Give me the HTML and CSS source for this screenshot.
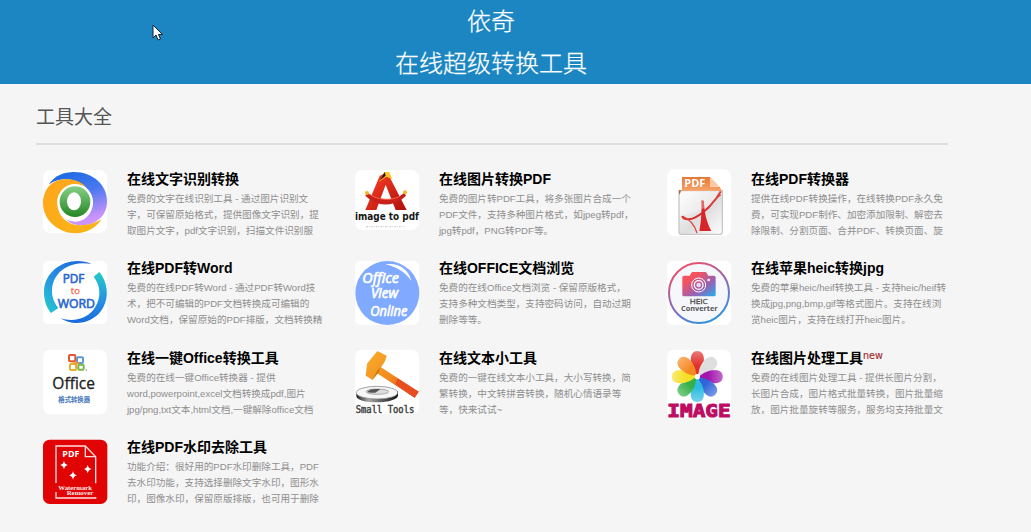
FILE: index.html
```html
<!DOCTYPE html>
<html lang="zh-CN">
<head>
<meta charset="utf-8">
<title>依奇在线超级转换工具</title>
<link rel="stylesheet" href="styles.css">
</head>
<body>
<header class="banner">
  <h1 class="banner-title">依奇<br>在线超级转换工具</h1>
</header>
<svg class="cursor" viewBox="0 0 11 17"><path d="M1 1v13l3-3 2 5 2.500-1-2-4.500h4z" fill="#fff" stroke="#123" stroke-width="1"/></svg>
<main class="page">
  <h2 class="section-title">工具大全</h2>
  <div class="tools">

    <a class="tool">
      <svg class="icon" viewBox="38 33 192 192">
        <defs>
          <linearGradient id="ob" x1="0" y1="0" x2="0.300" y2="1"><stop offset="0" stop-color="#1268e0"/><stop offset=".5" stop-color="#4a78f0"/><stop offset="1" stop-color="#cb94fb"/></linearGradient>
          <linearGradient id="og" x1="0" y1="0" x2="0" y2="1"><stop offset="0" stop-color="#86cf86"/><stop offset="1" stop-color="#258625"/></linearGradient>
          <linearGradient id="oy" x1="0" y1="0" x2="1" y2="1"><stop offset="0" stop-color="#ffa51a"/><stop offset="1" stop-color="#f8b619"/></linearGradient>
        </defs>
        <rect x="38" y="30" width="192" height="189" rx="22" fill="#fff"/>
        <path d="M56 73C72 47 101 36 131 36c56 0 99 38 99 89 0 42-34 71-77 71-22 0-39-8-47-22z" fill="url(#ob)"/>
        <path d="M54 75c24-20 68-24 97-4 26 14 38 36 37 59-1 28-21 50-43 54-15 3-31-1-41-9z" fill="#fff"/>
        <path d="M38 130c0-42 28-71 62-72 26-2 48 5 66 21C115 66 80 92 81 130c1 38 30 65 67 66 22 1 44-6 66-18-17 26-45 42-78 42-54 0-98-41-98-90z" fill="url(#oy)"/>
        <circle cx="134" cy="125" r="53" fill="#fff"/>
        <circle cx="134" cy="125" r="46" fill="url(#og)"/>
        <ellipse cx="131" cy="124" rx="21" ry="27" fill="#fff"/>
      </svg>
      <div class="info"><h3 class="name">在线文字识别转换</h3><p class="desc">免费的文字在线识别工具 - 通过图片识别文<br>字，可保留原始格式，提供图像文字识别，提<br>取图片文字，pdf文字识别，扫描文件识别服</p></div>
    </a>

    <a class="tool">
      <svg class="icon" viewBox="29 33 192 192">
        <defs><linearGradient id="ar" x1="0" y1="0" x2="1" y2="1"><stop offset="0" stop-color="#ff4226"/><stop offset="1" stop-color="#b0100c"/></linearGradient></defs>
        <rect x="29" y="30" width="192" height="180" rx="22" fill="#fff"/>
        <path d="M103 48l22-12 59 114h-33L121 74 93 150H60z" fill="url(#ar)"/>
        <path d="M101 66l17-30h13l10 21-18-7z" fill="#ffc41e"/>
        <path d="M103 62l15-26 3 11z" fill="#301010"/>
        <path d="M65 98l18 11c25 12 60 12 80 0l14-11 5 9-14 12c-26 19-67 19-93 1l-15-13z" fill="#c9201a"/>
        <path d="M65 98l18 11c25 12 60 12 80 0" fill="none" stroke="#fa6546" stroke-width="3"/>
        <g fill="#f5b62b"><circle cx="65" cy="99" r="6"/><circle cx="179" cy="97" r="6"/></g>
        <text x="29" y="180" textLength="192" lengthAdjust="spacingAndGlyphs" class="art-bold" font-size="29">image to pdf</text>
        <path d="M63 200h115" stroke="#ccc" stroke-width="4" stroke-dasharray="5 3 2 4"/>
      </svg>
      <div class="info"><h3 class="name">在线图片转换PDF</h3><p class="desc">免费的图片转PDF工具，将多张图片合成一个<br>PDF文件，支持多种图片格式，如jpeg转pdf，<br>jpg转pdf，PNG转PDF等。</p></div>
    </a>

    <a class="tool">
      <svg class="icon" viewBox="35 33 192 192">
        <defs>
          <linearGradient id="pg" x1="0" y1="0" x2="1" y2="1"><stop offset="0" stop-color="#fff"/><stop offset=".55" stop-color="#dedede"/><stop offset="1" stop-color="#fff"/></linearGradient>
          <linearGradient id="po" x1="0" y1="0" x2="0" y2="1"><stop offset="0" stop-color="#e57837"/><stop offset="1" stop-color="#f7a36a"/></linearGradient>
        </defs>
        <rect x="35" y="28" width="192" height="200" rx="22" fill="#fff"/>
        <path d="M71 92h130v123q0 8-8 8H79q-8 0-8-8z" fill="url(#pg)" stroke="#c8c8c8" stroke-width="4"/>
        <path d="M80 51h85v29h28l7 13H80z" fill="url(#po)"/>
        <path d="M165 51v29h28z" fill="#ffc8a2"/>
        <path d="M80 91l-9 14v-14z" fill="#b96238"/>
        <text x="87" y="82" textLength="63" lengthAdjust="spacingAndGlyphs" class="art-white" font-size="32">PDF</text>
        <path d="M196 94c-15 28-45 62-76 78-23 12-38 3-39-4" fill="none" stroke="#d72b2b" stroke-width="6"/>
        <path d="M138 120c1 30 1 55-6 93h36c-15-29-22-60-22-91z" fill="#d92529"/>
        <path d="M82 169c20 8 35 23 43 50M196 104c-17 13-28 27-37 42" fill="none" stroke="#df4540" stroke-width="4"/>
        <path d="M74 92h123q-42 68-123 73z" fill="#fff" opacity=".3"/>
      </svg>
      <div class="info"><h3 class="name">在线PDF转换器</h3><p class="desc">提供在线PDF转换操作，在线转换PDF永久免<br>费，可实现PDF制作、加密添加限制、解密去<br>除限制、分割页面、合并PDF、转换页面、旋</p></div>
    </a>

    <a class="tool">
      <svg class="icon" viewBox="38 33 192 192">
        <defs>
          <linearGradient id="wl" x1="1" y1="0" x2="0" y2="1"><stop offset="0" stop-color="#1a61d6"/><stop offset=".55" stop-color="#278de5"/><stop offset="1" stop-color="#22cfcb"/></linearGradient>
          <linearGradient id="wr" x1="0" y1="0" x2="0" y2="1"><stop offset="0" stop-color="#22ccc9"/><stop offset=".6" stop-color="#278de5"/><stop offset="1" stop-color="#1969dc"/></linearGradient>
        </defs>
        <rect x="38" y="33" width="192" height="189" rx="16" fill="#fff"/>
        <path d="M183 42C121 15 45 54 41 122c-1 25 6 48 21 67l22-15C52 135 62 80 103 55c24-15 52-18 80-13z" fill="url(#wl)"/>
        <path d="M190 80l17-14c27 33 31 82 5 117-26 35-80 49-122 22 44 13 85-1 105-34 18-30 16-65-5-91z" fill="url(#wr)"/>
        <g fill="#2a67ce" stroke="#2a67ce" stroke-width="2" class="art-sans">
          <text x="97" y="98" textLength="65" lengthAdjust="spacingAndGlyphs" font-size="39">PDF</text>
          <text x="82" y="173" textLength="112" lengthAdjust="spacingAndGlyphs" font-size="39">WORD</text>
        </g>
        <text x="121" y="131" textLength="28" class="art-sans" font-size="28" fill="#f36b50" stroke="#f36b50">to</text>
      </svg>
      <div class="info"><h3 class="name">在线PDF转Word</h3><p class="desc">免费的在线PDF转Word - 通过PDF转Word技<br>术，把不可编辑的PDF文档转换成可编辑的<br>Word文档，保留原始的PDF排版，文档转换精</p></div>
    </a>

    <a class="tool">
      <svg class="icon" viewBox="29 33 192 192">
        <rect x="29" y="33" width="192" height="191" rx="16" fill="#fff"/>
        <circle cx="126" cy="129" r="96" fill="#80aaff"/>
        <path d="M120 43c42-6 70 16 78 50-18-27-43-42-78-50z" fill="#fff"/>
        <g fill="#fff" stroke="#fff" stroke-width="2" font-style="italic" class="art-sans">
          <text x="51" y="98" textLength="110" lengthAdjust="spacingAndGlyphs" font-size="43">Office</text>
          <text x="77" y="143" textLength="81" lengthAdjust="spacingAndGlyphs" font-size="43">View</text>
          <text x="75" y="197" textLength="111" lengthAdjust="spacingAndGlyphs" font-size="43">Online</text>
        </g>
      </svg>
      <div class="info"><h3 class="name">在线OFFICE文档浏览</h3><p class="desc">免费的在线Office文档浏览 - 保留原版格式，<br>支持多种文档类型，支持密码访问，自动过期<br>删除等等。</p></div>
    </a>

    <a class="tool">
      <svg class="icon" viewBox="35 33 192 192">
        <defs>
          <linearGradient id="hc" x1="0.200" y1="0" x2="0.700" y2="1"><stop offset="0" stop-color="#f64e5b"/><stop offset=".5" stop-color="#9465b9"/><stop offset="1" stop-color="#2d95de"/></linearGradient>
          <linearGradient id="hk" x1="0" y1="0" x2="1" y2="1"><stop offset=".25" stop-color="#f6535e"/><stop offset=".65" stop-color="#9561b7"/><stop offset="1" stop-color="#1eb5ef"/></linearGradient>
        </defs>
        <rect x="35" y="33" width="192" height="191" rx="16" fill="#fff"/>
        <circle cx="131" cy="129" r="90" fill="#f5f7fb" stroke="url(#hc)" stroke-width="6"/>
        <path d="M86 77h17l7-11h42l7 11h17q5 0 5 5v52q0 5-5 5H86q-5 0-5-5V82q0-5 5-5z" fill="url(#hk)"/>
        <g fill="none" stroke="#fff"><circle cx="130" cy="105" r="21" stroke-width="3"/><circle cx="130" cy="105" r="13" stroke-width="4"/></g>
        <circle cx="130" cy="105" r="7" fill="#e6d9fa"/><circle cx="160" cy="90" r="4" fill="#fff"/>
        <text x="103" y="162" textLength="54" lengthAdjust="spacingAndGlyphs" class="art-sans" font-size="22" fill="#555" stroke="#555">HEIC</text>
        <text x="77" y="182" textLength="110" lengthAdjust="spacingAndGlyphs" class="art-sans" font-weight="bold" font-size="22" fill="#555">Converter</text>
      </svg>
      <div class="info"><h3 class="name">在线苹果heic转换jpg</h3><p class="desc">免费的苹果heic/heif转换工具 - 支持heic/heif转<br>换成jpg,png,bmp,gif等格式图片。支持在线浏<br>览heic图片，支持在线打开heic图片。</p></div>
    </a>

    <a class="tool">
      <svg class="icon" viewBox="38 31 192 192">
        <rect x="38" y="30" width="192" height="194" rx="22" fill="#fff"/>
        <g fill="none" stroke-width="6">
          <rect x="116" y="46" width="19" height="19" rx="3" stroke="#e55532"/>
          <rect x="119" y="73" width="19" height="18" rx="3" stroke="#e5b22d"/>
          <rect x="140" y="53" width="18" height="17" rx="3" stroke="#5c99d8"/>
          <rect x="144" y="75" width="16" height="15" rx="3" stroke="#76b947"/>
          <path d="M137 65v20M127 70h20" stroke="#ef9b2c" stroke-width="4"/>
        </g>
        <circle cx="168" cy="91" r="2" fill="#777"/>
        <text x="66" y="148" textLength="128" lengthAdjust="spacingAndGlyphs" class="art-sans" font-size="50" fill="#222" stroke="#222">Office</text>
        <text x="84" y="188" textLength="95" lengthAdjust="spacingAndGlyphs" class="art-cjk" font-size="19" fill="#3971b8" stroke="#3971b8" stroke-width=".7">格式转换器</text>
      </svg>
      <div class="info"><h3 class="name">在线一键Office转换工具</h3><p class="desc">免费的在线一键Office转换器 - 提供<br>word,powerpoint,excel文档转换成pdf,图片<br>jpg/png,txt文本,html文档,一键解除office文档</p></div>
    </a>

    <a class="tool">
      <svg class="icon" viewBox="29 31 192 192">
        <defs>
          <linearGradient id="hm" x1="0" y1="0" x2="1" y2="1"><stop offset="0" stop-color="#f9b02c"/><stop offset=".5" stop-color="#f28b1e"/><stop offset="1" stop-color="#df3a20"/></linearGradient>
          <linearGradient id="hb" x1="0" y1="0" x2="1" y2="0"><stop offset="0" stop-color="#222"/><stop offset=".3" stop-color="#aaa"/><stop offset=".65" stop-color="#555"/><stop offset="1" stop-color="#111"/></linearGradient>
        </defs>
        <rect x="29" y="30" width="192" height="194" rx="22" fill="#fff"/>
        <path d="M33 162v7c0 12 28 19 62 19s63-8 63-21v-12z" fill="url(#hb)"/>
        <ellipse cx="95" cy="159" rx="62" ry="19" fill="#f6f6f6" stroke="#777" stroke-width="2"/>
        <ellipse cx="96" cy="156" rx="34" ry="8" fill="#ddd" stroke="#888" stroke-width="2"/>
        <path d="M66 156c8-9 25-9 39-7l-15 10c-13 1-21 0-24-3z" fill="#555"/>
        <path d="M96 34l28 14-5 17-12 18 113 73-12 18L95 101l-13 20-21-13 4-36z" fill="url(#hm)"/>
        <path d="M82 121l14-28 9-11-5 16z" fill="#c9740a"/>
        <path d="M156 116l64 40-12 18-58-40z" fill="#e84d22"/>
        <text x="31" y="220" textLength="176" lengthAdjust="spacingAndGlyphs" font-size="29" class="art-mono">Small Tools</text>
      </svg>
      <div class="info"><h3 class="name">在线文本小工具</h3><p class="desc">免费的一键在线文本小工具，大小写转换，简<br>繁转换，中文转拼音转换，随机心情语录等<br>等，快来试试~</p></div>
    </a>

    <a class="tool">
      <svg class="icon" viewBox="35 31 192 192">
        <defs>
          <path id="petal" d="M126 107C108 87 105 67 107 52c2-11 8-17 19-17s17 6 19 17c2 15-1 35-19 55z"/>
          <linearGradient id="shine" x1="0" y1="0" x2="0" y2="1"><stop offset="0" stop-color="#fff" stop-opacity=".35"/><stop offset=".6" stop-color="#fff" stop-opacity="0"/></linearGradient>
        </defs>
        <rect x="35" y="30" width="192" height="206" rx="22" fill="#fff"/>
        <use href="#petal" fill="#e1302c"/>
        <use href="#petal" fill="#dedede" transform="rotate(45 126 111)"/>
        <use href="#petal" fill="#a315ae" transform="rotate(90 126 111)"/>
        <use href="#petal" fill="#3164d8" transform="rotate(135 126 111)"/>
        <use href="#petal" fill="#2dbce1" transform="rotate(180 126 111)"/>
        <use href="#petal" fill="#35af47" transform="rotate(225 126 111)"/>
        <use href="#petal" fill="#f5df24" transform="rotate(270 126 111)"/>
        <use href="#petal" fill="#f58a24" transform="rotate(315 126 111)"/>
        <g fill="url(#shine)"><use href="#petal"/><use href="#petal" transform="rotate(90 126 111)"/><use href="#petal" transform="rotate(135 126 111)"/><use href="#petal" transform="rotate(180 126 111)"/><use href="#petal" transform="rotate(225 126 111)"/><use href="#petal" transform="rotate(270 126 111)"/><use href="#petal" transform="rotate(315 126 111)"/></g>
        <circle cx="126" cy="111" r="8" fill="#fff"/>
        <text x="36" y="233" textLength="190" lengthAdjust="spacingAndGlyphs" class="art-image" font-size="53">IMAGE</text>
      </svg>
      <div class="info"><h3 class="name">在线图片处理工具<sup class="new">new</sup></h3><p class="desc">免费的在线图片处理工具 - 提供长图片分割，<br>长图片合成，图片格式批量转换，图片批量缩<br>放，图片批量旋转等服务，服务均支持批量文</p></div>
    </a>

    <a class="tool">
      <svg class="icon" viewBox="38 31 192 192">
        <rect x="38" y="30" width="193" height="193" rx="20" fill="#e10404"/>
        <path d="M77 160V49h88l31 32v80M77 187v18h119v-3M165 49v32h31" fill="none" stroke="#ffdede" stroke-width="4"/>
        <text x="96" y="81" textLength="51" lengthAdjust="spacingAndGlyphs" class="art-white" font-size="27">PDF</text>
        <g fill="#fff"><path id="star" d="M101 93q2 11 12 13-10 2-12 13-2-11-12-13 10-2 12-13z"/><use href="#star" x="71" y="12"/><use href="#star" x="27" y="31"/></g>
        <g class="art-serif" font-size="20"><text x="84" y="180" textLength="101" lengthAdjust="spacingAndGlyphs">Watermark</text><text x="109" y="197" textLength="80" lengthAdjust="spacingAndGlyphs">Remover</text></g>
      </svg>
      <div class="info"><h3 class="name">在线PDF水印去除工具</h3><p class="desc">功能介绍：很好用的PDF水印删除工具，PDF<br>去水印功能，支持选择删除文字水印，图形水<br>印，图像水印，保留原版排版，也可用于删除</p></div>
    </a>

  </div>
</main>
</body>
</html>
```
FILE: styles.css
```css
* { box-sizing: border-box; }
body {
  margin: 0;
  height: 532px;
  overflow: hidden;
  background: #f5f5f5;
  font-family: "Liberation Sans", "Noto Sans CJK SC", sans-serif;
}
h1, h2, h3, p { margin: 0; }
.banner {
  height: 84px;
  padding: 1px 49px 0 0;
  background: #1b86c1;
  text-align: center;
}
.banner-title {
  color: #fff;
  font-size: 24px;
  font-weight: 300;
  line-height: 42px;
  -webkit-text-stroke: 0.25px #fff;
}
.cursor {
  position: absolute;
  left: 152px;
  top: 24px;
  width: 11px;
  height: 17px;
}
.page { width: 948px; padding-left: 36px; }
.section-title {
  height: 61px;
  padding-top: 19px;
  border-bottom: 2px solid #dedede;
  color: #555;
  font-size: 19px;
  font-weight: 400;
  line-height: 30px;
}
.tools {
  display: grid;
  grid-template-columns: repeat(3, 312px);
  grid-auto-rows: 89.6px;
  padding: 26px 0 0 6.67px;
}
.tool {
  display: flex;
  gap: 20.33px;
}
.icon {
  flex: none;
  width: 64px;
  height: 64px;
  overflow: visible;
}
.info {
  margin-top: -2.5px;
  white-space: nowrap;
}
.name {
  height: 22px;
  color: #000;
  font-size: 14px;
  font-weight: 700;
  line-height: 20px;
}
.new {
  color: #a73333;
  font-family: "DejaVu Sans", sans-serif;
  font-size: 9.6px;
  font-weight: 400;
  line-height: 0;
  vertical-align: 4px;
  -webkit-text-stroke: 0.2px #a73333;
}
.desc {
  color: #8e8e8e;
  font-size: 9.6px;
  line-height: 16px;
}
.art-sans { font-family: "Open Sans", sans-serif; }
.art-bold { font-family: "DejaVu Sans", sans-serif; font-weight: 700; fill: #161616; }
.art-white { font-family: "Open Sans", sans-serif; font-weight: 700; fill: #fff; }
.art-cjk { font-family: "Noto Sans CJK SC", sans-serif; }
.art-mono { font-family: "DejaVu Sans Mono", monospace; fill: #444; stroke: #444; stroke-width: 1.4; }
.art-image { font-family: "DejaVu Sans Mono", monospace; font-weight: 700; fill: #bd0c62; stroke: #bd0c62; stroke-width: 3; }
.art-serif { font-family: "Liberation Serif", serif; font-weight: 700; fill: #ffe9e9; }
```
